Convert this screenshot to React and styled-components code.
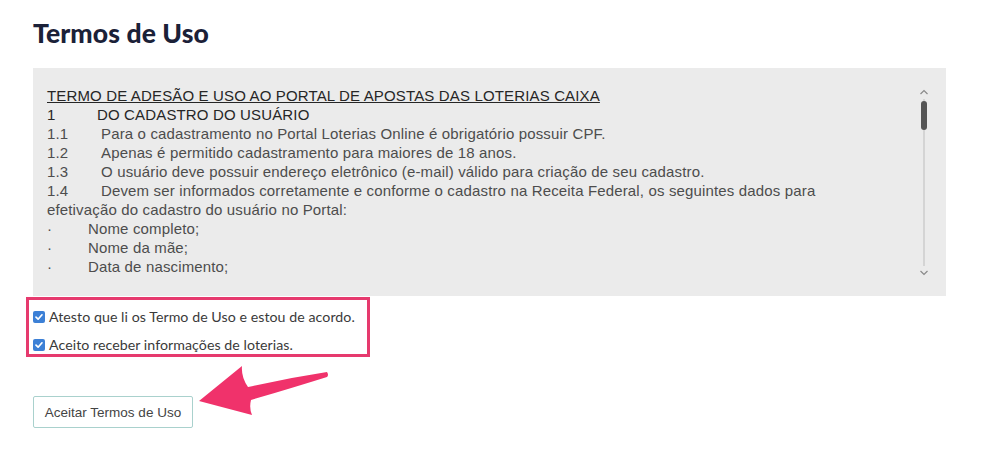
import React from "react";
import styled, { createGlobalStyle } from "styled-components";

const Global = createGlobalStyle`
  html, body { margin: 0; padding: 0; background: #ffffff; }
  body { font-family: "Liberation Sans", Arial, sans-serif; }
  * { box-sizing: border-box; }
`;

const Page = styled.div`
  position: relative;
  width: 984px;
  height: 450px;
  padding: 17px 0 0 33px;
  overflow: hidden;
`;

const Title = styled.h1`
  margin: 0;
  font-family: "Lato", "Noto Sans", sans-serif;
  font-weight: 900;
  font-size: 26.5px;
  line-height: 33px;
  color: #1b2138;
  letter-spacing: 0.1px;
`;

const TermsBox = styled.div`
  position: relative;
  margin-top: 18px;
  width: 913px;
  height: 228px;
  background: #ebebeb;
  padding: 18px 40px 0 14px;
  overflow: hidden;
`;

const Line = styled.div`
  font-family: "Liberation Sans", Arial, sans-serif;
  font-size: 15px;
  line-height: 19px;
  letter-spacing: 0.15px;
  color: ${(p) => (p.$strong ? "#262626" : "#4d4d4d")};
  text-decoration: ${(p) => (p.$underline ? "underline" : "none")};
  white-space: nowrap;
`;

const Num = styled.span`
  display: inline-block;
  width: ${(p) => p.$w}px;
`;

const ScrollTrack = styled.div`
  position: absolute;
  top: 21px;
  right: 16px;
  bottom: 20px;
  width: 12px;
  display: flex;
  flex-direction: column;
  align-items: center;
`;

const Rail = styled.div`
  position: relative;
  flex: 1;
  width: 2px;
  margin: 4px 0;
  background: #d4d4d4;
`;

const Thumb = styled.div`
  position: absolute;
  top: 2px;
  left: -2px;
  width: 6px;
  height: 29px;
  border-radius: 3px;
  background: #555555;
`;

const Consent = styled.div`
  margin-top: 1px;
  margin-left: -7px;
  width: 344px;
  height: 60px;
  border: 3px solid #e63a6e;
  padding: 7px 0 0 4px;
  display: flex;
  flex-direction: column;
  gap: 8px;
`;

const CheckRow = styled.label`
  display: flex;
  align-items: center;
  gap: 4px;
  font-family: "Lato", "Noto Sans", sans-serif;
  font-size: 14.2px;
  line-height: 20px;
  letter-spacing: 0.05px;
  color: #3a3a3a;
`;

const Box = styled.span`
  width: 12px;
  height: 12px;
  border-radius: 2px;
  background: #3c80d6;
  display: inline-flex;
  align-items: center;
  justify-content: center;
  flex: none;
`;

const AcceptButton = styled.button`
  margin-top: 39px;
  width: 160px;
  height: 32px;
  background: #ffffff;
  border: 1px solid #a9d1cd;
  border-radius: 2px;
  font-family: "Liberation Sans", Arial, sans-serif;
  font-size: 13.5px;
  color: #444444;
  padding: 0;
`;

const Pointer = styled.svg`
  position: absolute;
  left: 190px;
  top: 360px;
  width: 150px;
  height: 65px;
`;

const Check = () => (
  <Box>
    <svg width="10" height="10" viewBox="0 0 10 10">
      <path d="M2 5.2 L4.1 7.2 L8 2.8" fill="none" stroke="#fff" strokeWidth="1.7" strokeLinecap="round" strokeLinejoin="round" />
    </svg>
  </Box>
);

const Chevron = ({ up }) => (
  <svg width="10" height="6" viewBox="0 0 10 6">
    <path d={up ? "M1.5 5 L5 1.5 L8.5 5" : "M1.5 1 L5 4.5 L8.5 1"} fill="none" stroke="#8a8a8a" strokeWidth="1.2" />
  </svg>
);

export default function App() {
  return (
    <Page>
      <Global />
      <Title>Termos de Uso</Title>
      <TermsBox>
        <Line $strong $underline>TERMO DE ADESÃO E USO AO PORTAL DE APOSTAS DAS LOTERIAS CAIXA</Line>
        <Line $strong><Num $w={50}>1</Num>DO CADASTRO DO USUÁRIO</Line>
        <Line><Num $w={54}>1.1</Num>Para o cadastramento no Portal Loterias Online é obrigatório possuir CPF.</Line>
        <Line><Num $w={54}>1.2</Num>Apenas é permitido cadastramento para maiores de 18 anos.</Line>
        <Line><Num $w={54}>1.3</Num>O usuário deve possuir endereço eletrônico (e-mail) válido para criação de seu cadastro.</Line>
        <Line><Num $w={54}>1.4</Num>Devem ser informados corretamente e conforme o cadastro na Receita Federal, os seguintes dados para</Line>
        <Line>efetivação do cadastro do usuário no Portal:</Line>
        <Line><Num $w={41}>·</Num>Nome completo;</Line>
        <Line><Num $w={41}>·</Num>Nome da mãe;</Line>
        <Line><Num $w={41}>·</Num>Data de nascimento;</Line>
        <ScrollTrack>
          <Chevron up />
          <Rail><Thumb /></Rail>
          <Chevron />
        </ScrollTrack>
      </TermsBox>
      <Consent>
        <CheckRow><Check />Atesto que li os Termo de Uso e estou de acordo.</CheckRow>
        <CheckRow><Check />Aceito receber informações de loterias.</CheckRow>
      </Consent>
      <AcceptButton>Aceitar Termos de Uso</AcceptButton>
      <Pointer viewBox="190 360 150 65">
        <path
          d="M199 401 L242 366 Q241 377 248 387 Q288 378 327 372 Q329 375 327 377 Q292 388 251 400 Q249 408 252 415 Z"
          fill="#f0326b"
        />
      </Pointer>
    </Page>
  );
}
